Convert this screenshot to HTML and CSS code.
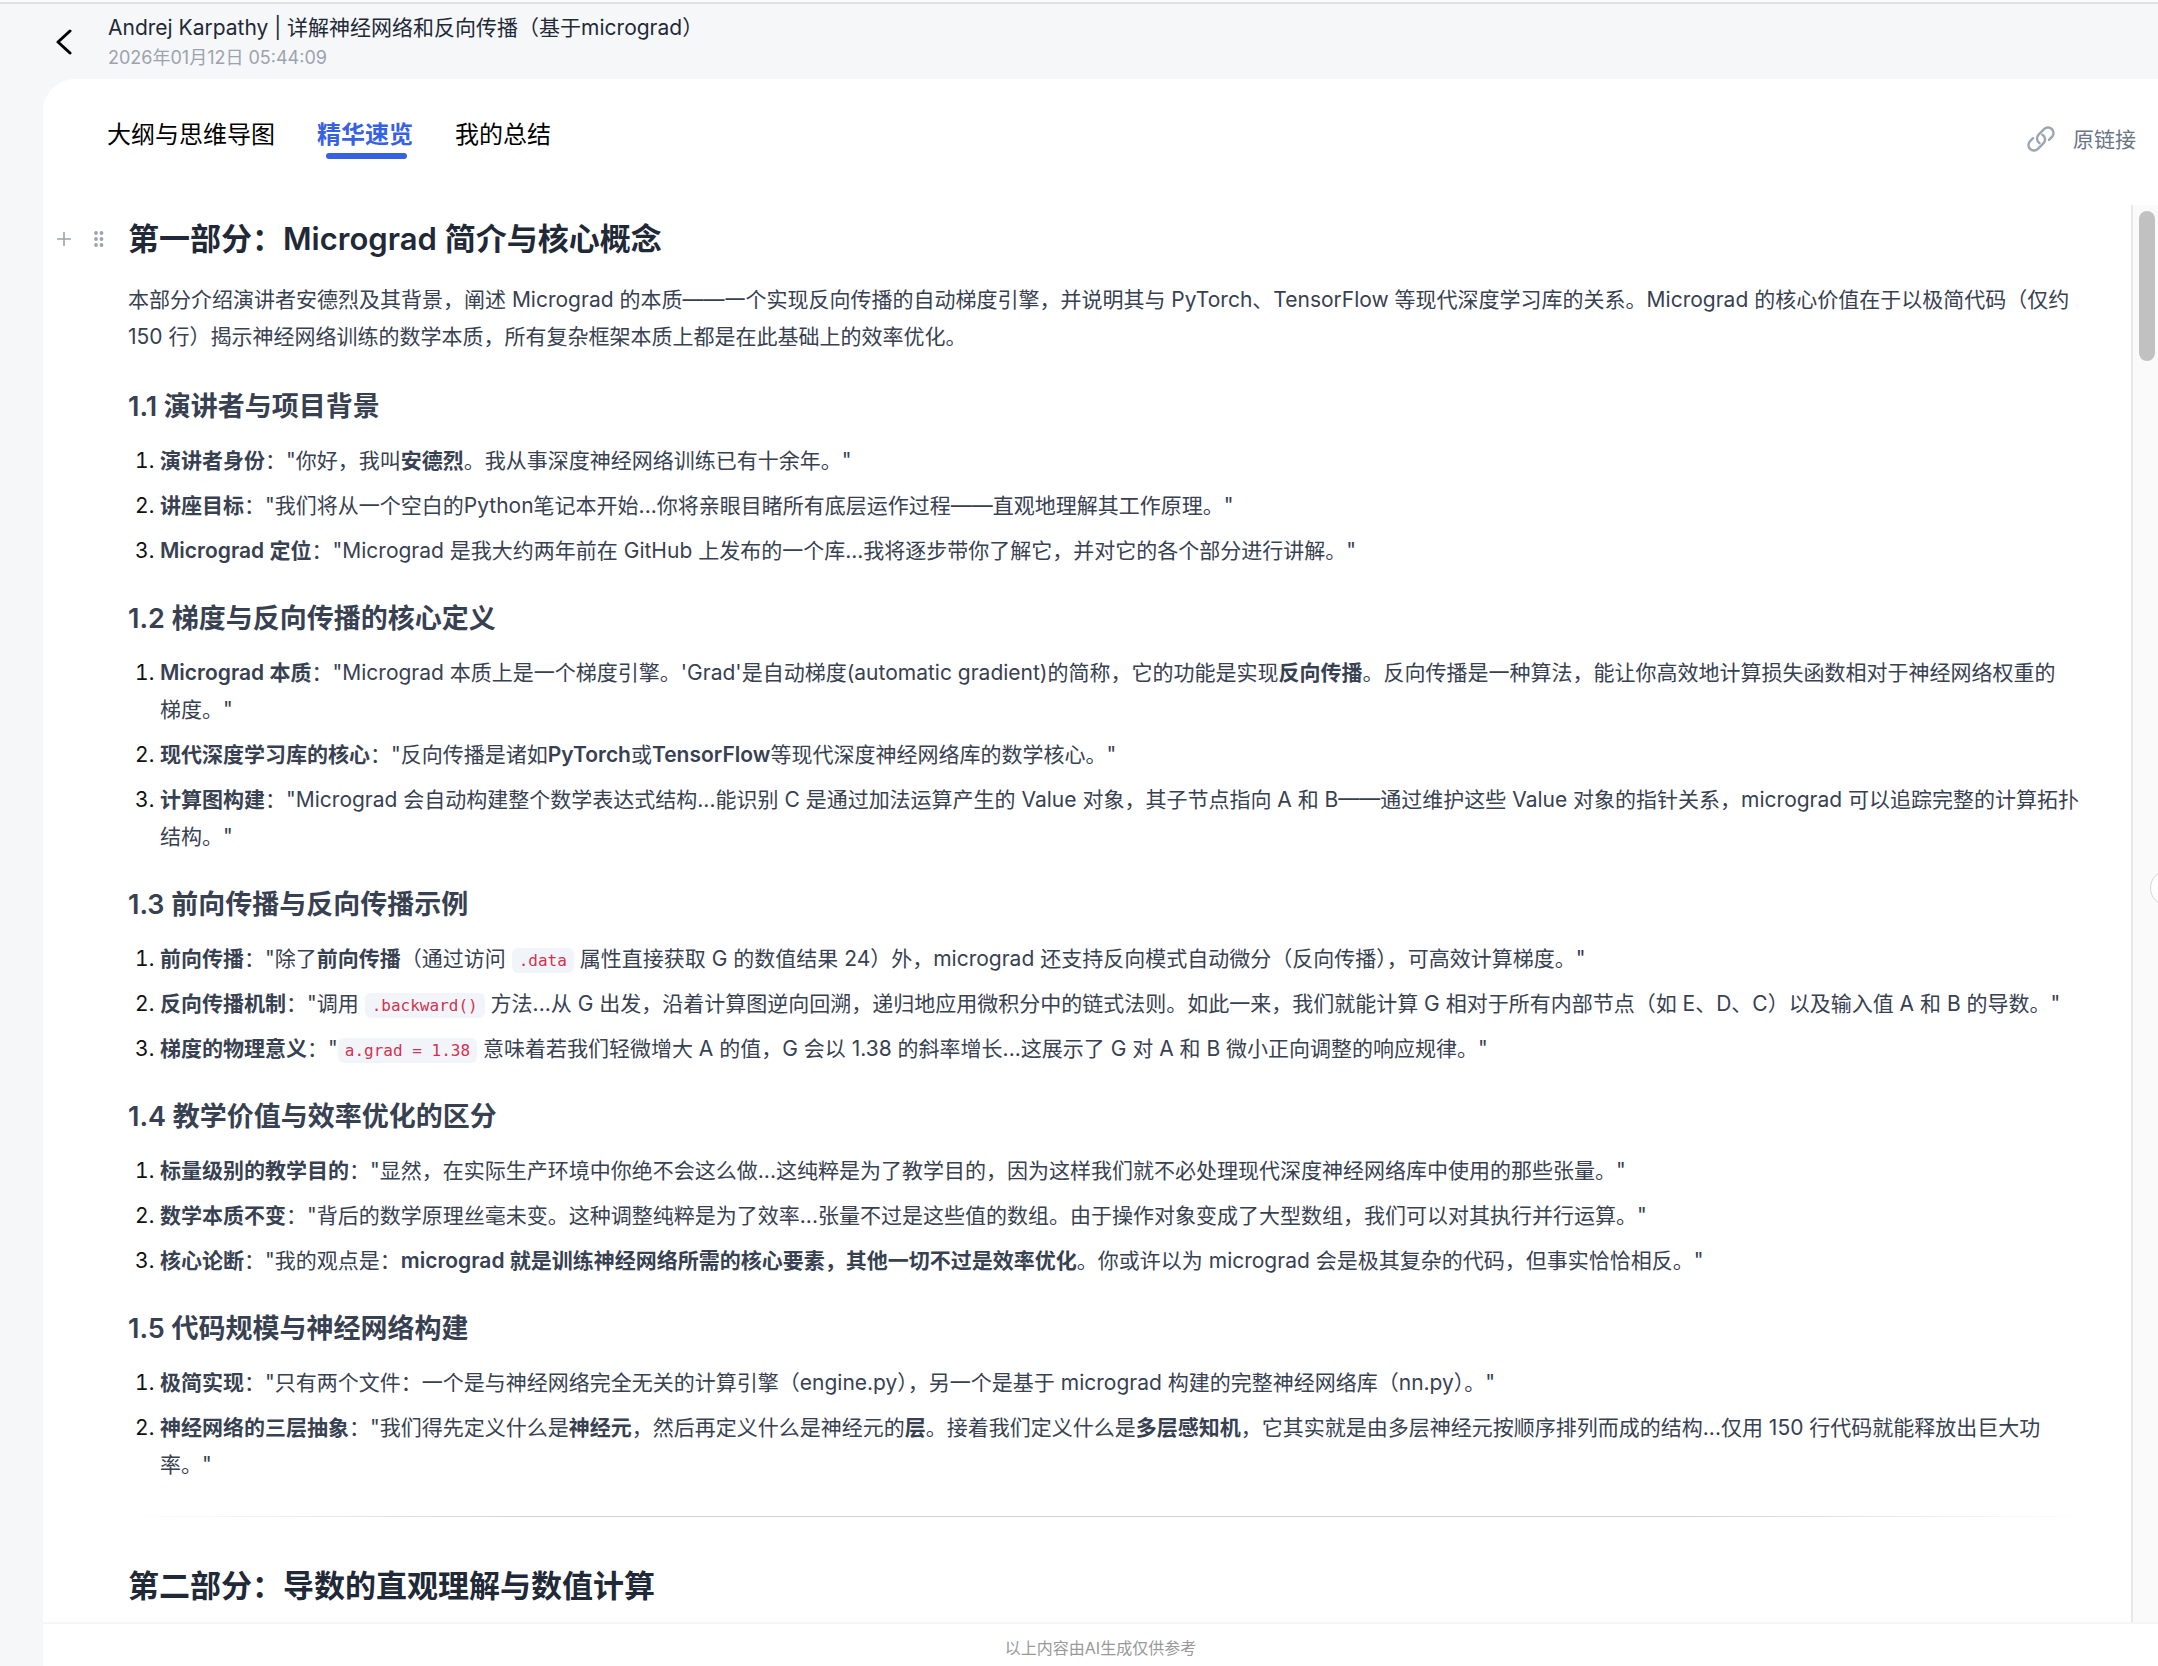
FILE: index.html
```html
<!DOCTYPE html>
<html lang="zh-CN">
<head>
    <meta charset="UTF-8">
    <meta name="viewport" content="width=device-width, initial-scale=1.0">
    <title>Andrej Karpathy | 详解神经网络和反向传播（基于micrograd）</title>
    <link rel="stylesheet" href="styles.css">
</head>
<body>
    <header class="topbar">
        <button class="back" type="button" aria-label="返回">
            <svg width="18" height="26" viewBox="0 0 18 26" fill="none" stroke="#000" stroke-width="3" stroke-linecap="round" stroke-linejoin="round"><path d="M15 2L3 13l12 11"/></svg>
        </button>
        <div class="heading">
            <div class="title">Andrej Karpathy | 详解神经网络和反向传播（基于micrograd）</div>
            <div class="date">2026年01月12日 05:44:09</div>
        </div>
    </header>

    <main class="panel">
        <nav class="tabs">
            <button class="tab" type="button">大纲与思维导图</button>
            <button class="tab active" type="button">精华速览</button>
            <button class="tab" type="button">我的总结</button>
            <a class="source" href="#">
                <svg width="28" height="28" viewBox="0 0 28 28" fill="none" stroke="#9aa5b3" stroke-width="2.4" stroke-linecap="round"><path d="M22 14.8L24.9 11.9A5.5 5.5 0 0 0 17.1 4.1L11.6 9.6A5.5 5.5 0 0 0 12.6 18.2"/><path d="M6 13.2L3.1 16.1A5.5 5.5 0 0 0 10.9 23.9L16.4 18.4A5.5 5.5 0 0 0 15.4 9.8"/></svg>
                原链接
            </a>
        </nav>

        <div class="scroller">
            <article class="content">
                <div class="block-tools">
                    <button type="button" aria-label="添加">
                        <svg width="16" height="16" viewBox="0 0 16 16" stroke="#9ca3af" stroke-width="1.6"><path d="M8 1v14M1 8h14"/></svg>
                    </button>
                    <button type="button" aria-label="拖动">
                        <svg width="12" height="18" viewBox="0 0 12 18" fill="#9ca3af"><circle cx="3" cy="3" r="1.9"/><circle cx="8.5" cy="3" r="1.9"/><circle cx="3" cy="9" r="1.9"/><circle cx="8.5" cy="9" r="1.9"/><circle cx="3" cy="15" r="1.9"/><circle cx="8.5" cy="15" r="1.9"/></svg>
                    </button>
                </div>

                <h2>第一部分：Micrograd 简介与核心概念</h2>
                <p>本部分介绍演讲者安德烈及其背景，阐述 Micrograd 的本质——一个实现反向传播的自动梯度引擎，并说明其与 PyTorch、TensorFlow 等现代深度学习库的关系。Micrograd 的核心价值在于以极简代码（仅约 150 行）揭示神经网络训练的数学本质，所有复杂框架本质上都是在此基础上的效率优化。</p>

                <h3>1.1 演讲者与项目背景</h3>
                <ol>
                    <li><strong>演讲者身份</strong>："你好，我叫<strong>安德烈</strong>。我从事深度神经网络训练已有十余年。"</li>
                    <li><strong>讲座目标</strong>："我们将从一个空白的Python笔记本开始...你将亲眼目睹所有底层运作过程——直观地理解其工作原理。"</li>
                    <li><strong>Micrograd 定位</strong>："Micrograd 是我大约两年前在 GitHub 上发布的一个库...我将逐步带你了解它，并对它的各个部分进行讲解。"</li>
                </ol>

                <h3>1.2 梯度与反向传播的核心定义</h3>
                <ol>
                    <li><strong>Micrograd 本质</strong>："Micrograd 本质上是一个梯度引擎。'Grad'是自动梯度(automatic gradient)的简称，它的功能是实现<strong>反向传播</strong>。反向传播是一种算法，能让你高效地计算损失函数相对于神经网络权重的<span class="nowrap">梯度。"</span></li>
                    <li><strong>现代深度学习库的核心</strong>："反向传播是诸如<strong>PyTorch</strong>或<strong>TensorFlow</strong>等现代深度神经网络库的数学核心。"</li>
                    <li><strong>计算图构建</strong>："Micrograd 会自动构建整个数学表达式结构...能识别 C 是通过加法运算产生的 Value 对象，其子节点指向 A 和 B——通过维护这些 Value 对象的指针关系，micrograd 可以追踪完整的计算拓扑结构。"</li>
                </ol>

                <h3>1.3 前向传播与反向传播示例</h3>
                <ol>
                    <li><strong>前向传播</strong>："除了<strong>前向传播</strong>（通过访问 <code>.data</code> 属性直接获取 G 的数值结果 24）外，micrograd 还支持反向模式自动微分（反向传播），可高效计算梯度。"</li>
                    <li><strong>反向传播机制</strong>："调用 <code>.backward()</code> 方法...从 G 出发，沿着计算图逆向回溯，递归地应用微积分中的链式法则。如此一来，我们就能计算 G 相对于所有内部节点（如 E、D、C）以及输入值 A 和 B 的导数。"</li>
                    <li><strong>梯度的物理意义</strong>："<code>a.grad = 1.38</code> 意味着若我们轻微增大 A 的值，G 会以 1.38 的斜率增长...这展示了 G 对 A 和 B 微小正向调整的响应规律。"</li>
                </ol>

                <h3>1.4 教学价值与效率优化的区分</h3>
                <ol>
                    <li><strong>标量级别的教学目的</strong>："显然，在实际生产环境中你绝不会这么做...这纯粹是为了教学目的，因为这样我们就不必处理现代深度神经网络库中使用的那些张量。"</li>
                    <li><strong>数学本质不变</strong>："背后的数学原理丝毫未变。这种调整纯粹是为了效率...张量不过是这些值的数组。由于操作对象变成了大型数组，我们可以对其执行并行运算。"</li>
                    <li><strong>核心论断</strong>："我的观点是：<strong>micrograd 就是训练神经网络所需的核心要素，其他一切不过是效率优化</strong>。你或许以为 micrograd 会是极其复杂的代码，但事实恰恰相反。"</li>
                </ol>

                <h3>1.5 代码规模与神经网络构建</h3>
                <ol>
                    <li><strong>极简实现</strong>："只有两个文件：一个是与神经网络完全无关的计算引擎（engine.py），另一个是基于 micrograd 构建的完整神经网络库（nn.py）。"</li>
                    <li><strong>神经网络的三层抽象</strong>："我们得先定义什么是<strong>神经元</strong>，然后再定义什么是神经元的<strong>层</strong>。接着我们定义什么是<strong>多层感知机</strong>，它其实就是由多层神经元按顺序排列而成的结构...仅用 150 行代码就能释放出巨大功率。"</li>
                </ol>

                <hr>

                <h2>第二部分：导数的直观理解与数值计算</h2>
            </article>
            <div class="track"><div class="thumb"></div></div>
        </div>

        <footer class="note">以上内容由AI生成仅供参考</footer>
        <button class="drawer" type="button" aria-label="展开"></button>
    </main>
</body>
</html>
```
FILE: styles.css
```css
* {
    box-sizing: border-box;
}
body {
    margin: 0;
    height: 100vh;
    display: flex;
    flex-direction: column;
    overflow: hidden;
    border-top: 2px solid #fcfcfc;
    background-color: #f5f7f9;
    color: #374151;
    font-family: Inter, "Noto Sans CJK SC", sans-serif;
    font-size: 21px;
    line-height: 37px;
}
button {
    padding: 0;
    border: none;
    background: none;
    font: inherit;
    color: inherit;
    cursor: pointer;
}
svg {
    display: block;
}

/* header */
.topbar {
    display: flex;
    align-items: center;
    gap: 35px;
    height: 77px;
    padding-left: 55px;
    border-top: 2px solid #dfe1e2;
}
.heading {
    padding-top: 2px;
}
.title {
    color: #1f2937;
    line-height: 30px;
}
.date {
    color: #9ca3af;
    font-size: 18px;
    line-height: 30px;
}

/* white panel */
.panel {
    position: relative;
    flex: 1;
    min-height: 0;
    display: flex;
    flex-direction: column;
    margin-left: 43px;
    background-color: #fff;
    border-top-left-radius: 32px;
}
.tabs {
    display: flex;
    align-items: center;
    gap: 42px;
    height: 126px;
    padding: 0 22px 14px 64px;
}
.tab {
    position: relative;
    color: #000;
    font-size: 24px;
    line-height: 36px;
}
.tab.active {
    color: #3661e3;
    font-weight: 600;
}
.tab.active::after {
    content: "";
    position: absolute;
    left: 9px;
    right: 6px;
    bottom: -6px;
    height: 6px;
    border-radius: 3px;
    background-color: #3661e3;
}
.source {
    display: flex;
    align-items: center;
    gap: 18px;
    margin-left: auto;
    padding-top: 8px;
    color: #697586;
    text-decoration: none;
}

/* document */
.scroller {
    flex: 1;
    min-height: 0;
    display: flex;
    overflow: hidden;
}
.content {
    position: relative;
    flex: 1;
    padding: 12px 45px 0 85px;
}
.block-tools {
    position: absolute;
    top: 25px;
    left: 13px;
    display: flex;
    align-items: center;
    gap: 21px;
}
h2 {
    margin: 0 0 21px;
    color: #1f2937;
    font-size: 31px;
    font-weight: 600;
    line-height: 43px;
}
h3 {
    margin: 32px 0 18px;
    font-size: 27px;
    font-weight: 600;
    line-height: 35px;
}
p {
    margin: 0 0 34px;
}
ol {
    margin: 0;
    padding-left: 32px;
}
li + li {
    margin-top: 8px;
}
li::marker {
    color: #111;
}
strong {
    font-weight: 600;
}
.nowrap {
    white-space: nowrap;
}
code {
    padding: 3px 7px;
    border-radius: 6px;
    background-color: #f1f5f9;
    color: #d6304f;
    font-family: "DejaVu Sans Mono", monospace;
    font-size: 16px;
    line-height: 19px;
}
hr {
    height: 1px;
    margin: 33px 0 47px;
    border: none;
    background: linear-gradient(to right, transparent, #d1d3d6 20%, #d1d3d6 80%, transparent);
}
.track {
    width: 27px;
    padding: 6px 3px 0 6px;
    border-left: 2px solid #e8e8e8;
    background-color: #fafafa;
}
.thumb {
    height: 150px;
    border-radius: 8px;
    background-color: #c1c1c1;
}
.note {
    height: 44px;
    padding-top: 5px;
    border-top: 2px solid #f4f5f6;
    color: #999;
    font-size: 16px;
    line-height: 38px;
    text-align: center;
}

/* round handle, half hidden behind the window edge */
.drawer {
    position: absolute;
    top: 51%;
    right: -28px;
    width: 36px;
    height: 36px;
    margin-top: -18px;
    border: 1px solid #d1d5db;
    border-radius: 50%;
    background-color: #fff;
}
```
